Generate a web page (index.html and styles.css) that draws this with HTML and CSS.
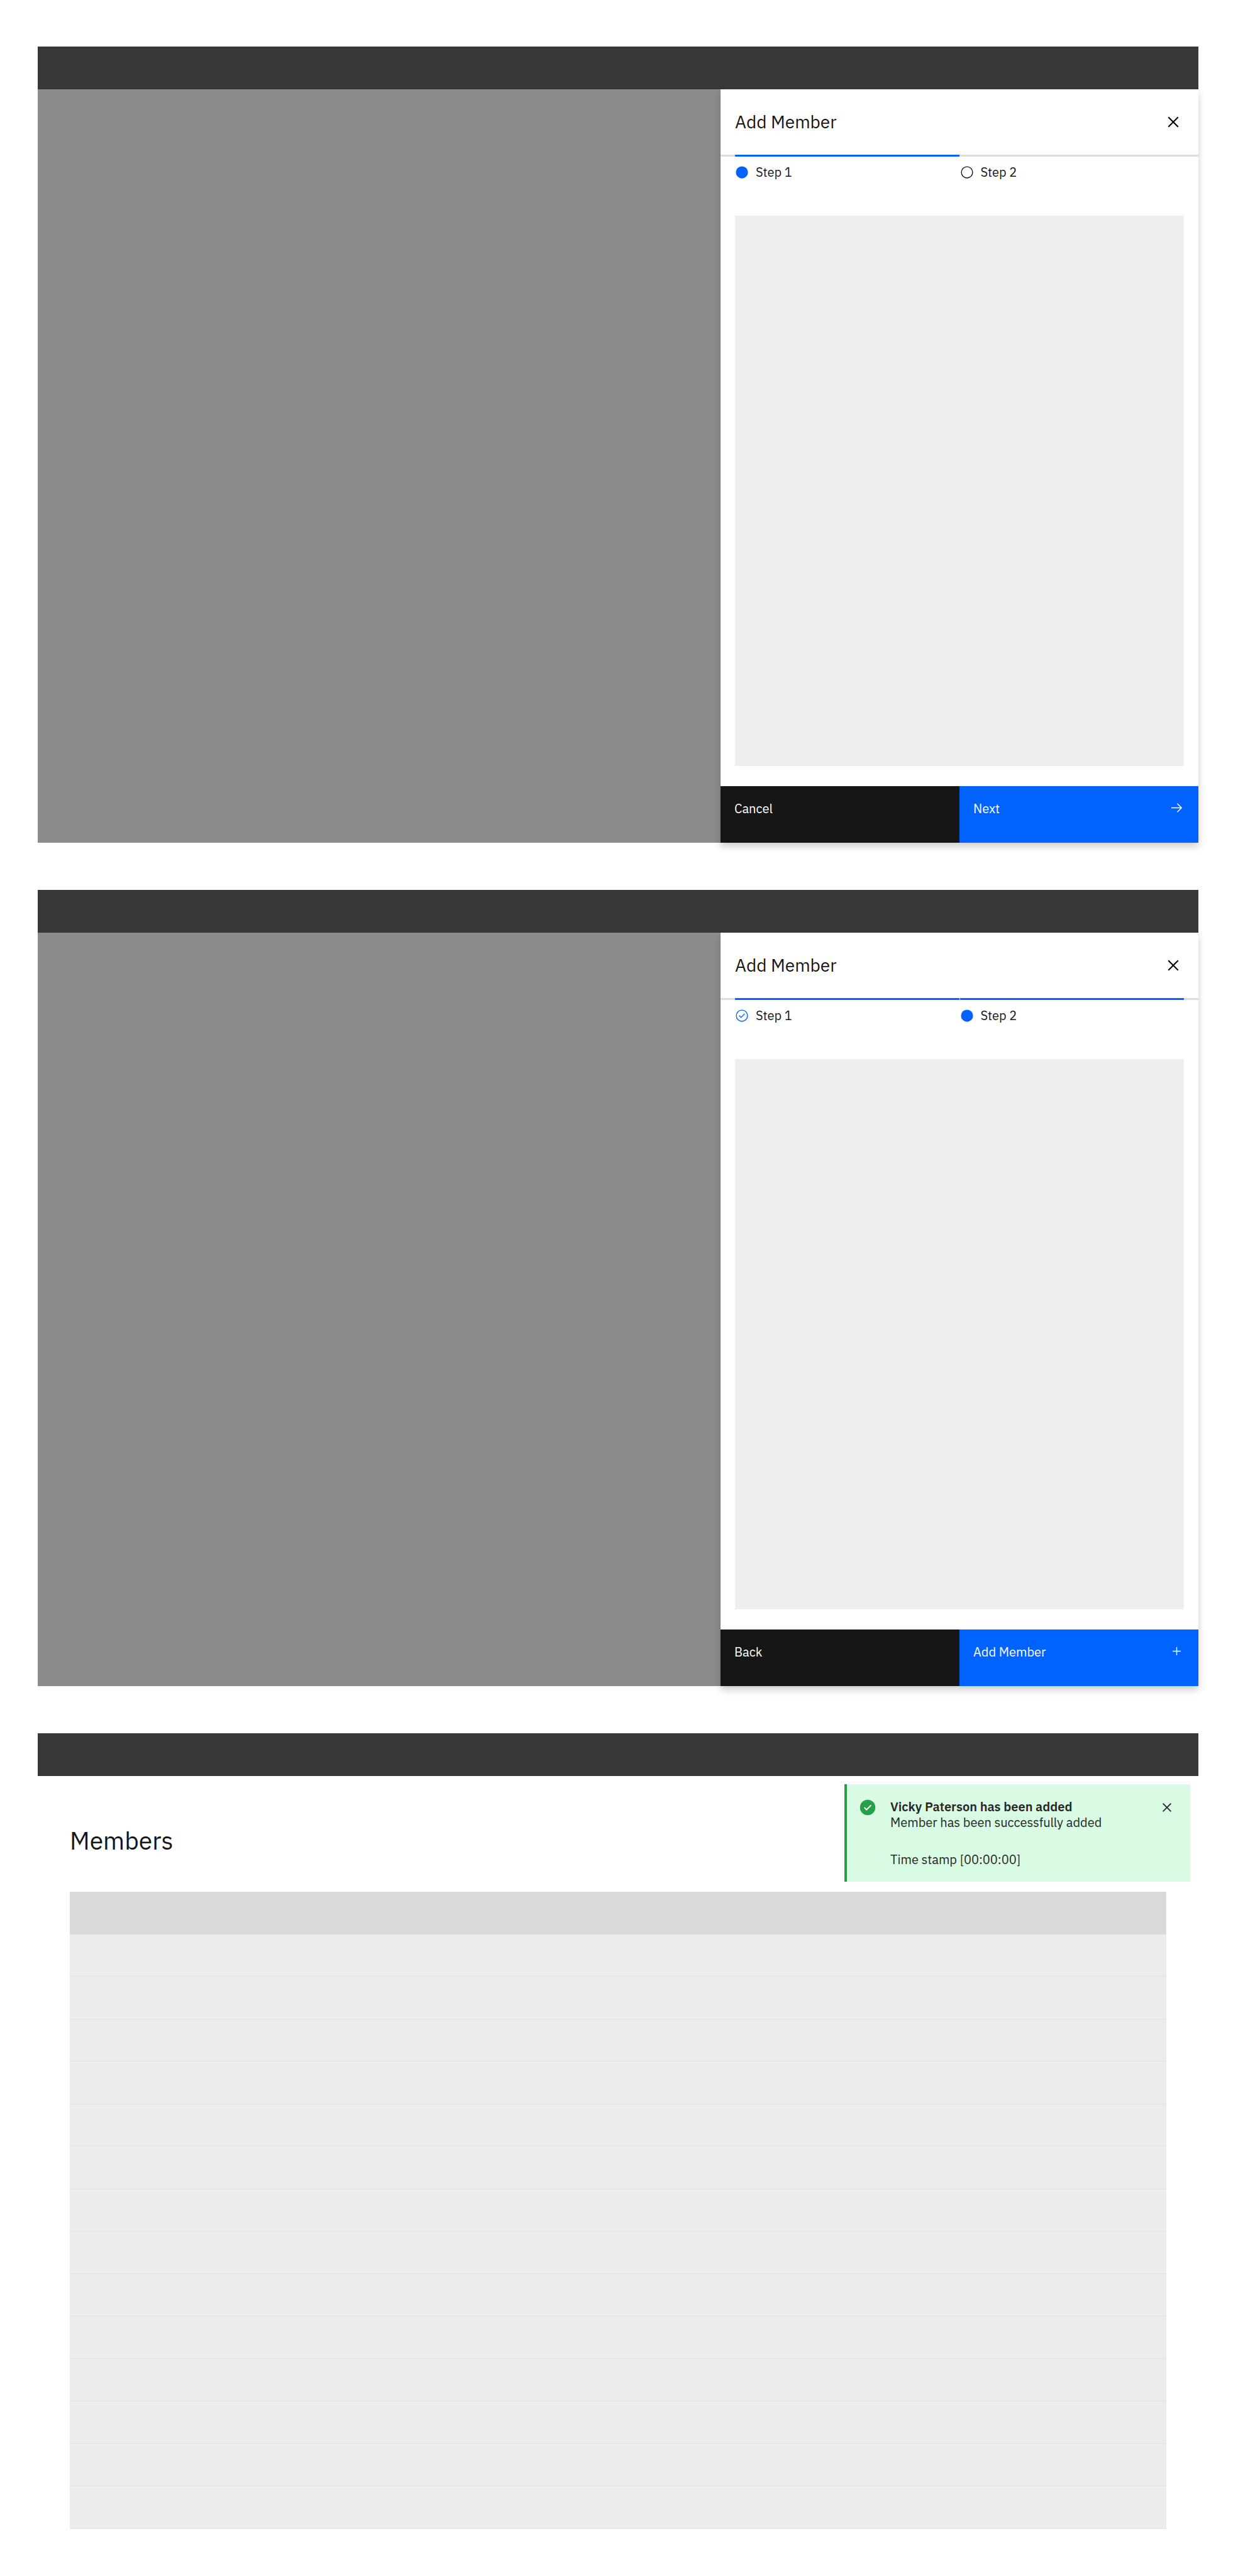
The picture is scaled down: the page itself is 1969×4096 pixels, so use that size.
FILE: index.html
```html
<!DOCTYPE html>
<html lang="en">
<head>
<meta charset="utf-8">
<meta name="viewport" content="width=device-width, initial-scale=1">
<title>Add Member</title>
<link rel="stylesheet" href="styles.css">
</head>
<body>
<main class="page">
  <section class="screen" aria-label="Add member, step 1">
    <div class="topbar"></div>
    <div class="backdrop">
      <div class="panel">
        <header class="panel-header">
          <h2 class="panel-title">Add Member</h2>
          <button class="icon-button" type="button" aria-label="Close">
            <svg class="icon-large" viewBox="0 0 32 32" aria-hidden="true"><path d="M24 9.4L22.6 8 16 14.6 9.4 8 8 9.4l6.6 6.6L8 22.6 9.4 24l6.6-6.6 6.6 6.6 1.4-1.4-6.6-6.6z"/></svg>
          </button>
        </header>
        <ol class="steps">
          <li class="step step-active">
            <svg class="step-icon" viewBox="0 0 32 32" aria-hidden="true"><circle cx="16" cy="16" r="14"/></svg>
            <span>Step 1</span>
          </li>
          <li class="step">
            <svg class="step-icon" viewBox="0 0 32 32" aria-hidden="true"><circle cx="16" cy="16" r="13" fill="none" stroke="#161616" stroke-width="2"/></svg>
            <span>Step 2</span>
          </li>
        </ol>
        <div class="slot"></div>
        <div class="actions">
          <button class="action action-secondary" type="button">Cancel</button>
          <button class="action action-primary" type="button">Next
            <svg class="action-icon" viewBox="0 0 32 32" aria-hidden="true"><path d="M18 6l-1.4 1.4 7.5 7.6H4v2h20.1l-7.5 7.6L18 26l10-10z"/></svg>
          </button>
        </div>
      </div>
    </div>
  </section>

  <section class="screen" aria-label="Add member, step 2">
    <div class="topbar"></div>
    <div class="backdrop">
      <div class="panel">
        <header class="panel-header">
          <h2 class="panel-title">Add Member</h2>
          <button class="icon-button" type="button" aria-label="Close">
            <svg class="icon-large" viewBox="0 0 32 32" aria-hidden="true"><path d="M24 9.4L22.6 8 16 14.6 9.4 8 8 9.4l6.6 6.6L8 22.6 9.4 24l6.6-6.6 6.6 6.6 1.4-1.4-6.6-6.6z"/></svg>
          </button>
        </header>
        <ol class="steps">
          <li class="step step-active">
            <svg class="step-icon" viewBox="0 0 32 32" aria-hidden="true"><circle cx="16" cy="16" r="13" fill="none" stroke="#0062ff" stroke-width="2"/><path d="M14 21.4l-5-5 1.4-1.4 3.6 3.6 7.6-7.6 1.4 1.4z"/></svg>
            <span>Step 1</span>
          </li>
          <li class="step step-active">
            <svg class="step-icon" viewBox="0 0 32 32" aria-hidden="true"><circle cx="16" cy="16" r="14"/></svg>
            <span>Step 2</span>
          </li>
        </ol>
        <div class="slot"></div>
        <div class="actions">
          <button class="action action-secondary" type="button">Back</button>
          <button class="action action-primary" type="button">Add Member
            <svg class="action-icon" viewBox="0 0 32 32" aria-hidden="true"><path d="M17 15V7h-2v8H7v2h8v8h2v-8h8v-2z"/></svg>
          </button>
        </div>
      </div>
    </div>
  </section>

  <section class="screen" aria-label="Members">
    <div class="topbar"></div>
    <div class="members">
      <h1 class="members-title">Members</h1>
      <table class="members-table" aria-label="Members">
        <thead><tr><th></th></tr></thead>
        <tbody>
          <tr><td></td></tr>
          <tr><td></td></tr>
          <tr><td></td></tr>
          <tr><td></td></tr>
          <tr><td></td></tr>
          <tr><td></td></tr>
          <tr><td></td></tr>
          <tr><td></td></tr>
          <tr><td></td></tr>
          <tr><td></td></tr>
          <tr><td></td></tr>
          <tr><td></td></tr>
          <tr><td></td></tr>
          <tr><td></td></tr>
        </tbody>
      </table>
      <div class="toast" role="status">
        <svg class="icon-medium toast-check" viewBox="0 0 32 32" aria-hidden="true"><circle cx="16" cy="16" r="14" fill="#24a148"/><path d="M14 21.6l-5-5 1.6-1.6 3.4 3.4 7.4-7.4 1.6 1.6z" fill="#fff"/></svg>
        <div class="toast-body">
          <p class="toast-title">Vicky Paterson has been added</p>
          <p>Member has been successfully added</p>
          <p class="toast-time">Time stamp [00:00:00]</p>
        </div>
        <button class="icon-button" type="button" aria-label="Dismiss">
          <svg class="icon-medium" viewBox="0 0 32 32" aria-hidden="true"><path d="M24 9.4L22.6 8 16 14.6 9.4 8 8 9.4l6.6 6.6L8 22.6 9.4 24l6.6-6.6 6.6 6.6 1.4-1.4-6.6-6.6z"/></svg>
        </button>
      </div>
    </div>
  </section>
</main>
</body>
</html>
```
FILE: styles.css
```css
* {
  box-sizing: border-box;
}

body {
  margin: 0;
  background: #fff;
  color: #161616;
  font-family: "IBM Plex Sans", Roboto, sans-serif;
  font-size: 20px;
  line-height: 25px;
}

h1, h2, p, ol {
  margin: 0;
  padding: 0;
  font-weight: 400;
}

button {
  border: 0;
  padding: 0;
  background: none;
  color: inherit;
  font: inherit;
  cursor: pointer;
}

svg {
  display: block;
  flex: none;
  fill: currentColor;
}

.page {
  display: flex;
  flex-direction: column;
  gap: 75px;
  padding: 74px 63px 75px 60px;
}

.topbar {
  height: 68px;
  background: #383838;
}

.backdrop {
  display: flex;
  justify-content: flex-end;
  background: #8b8b8b;
}

/* Side panel */
.panel {
  display: flex;
  flex-direction: column;
  width: 760px;
  background: #fff;
  box-shadow: 0 6px 11px rgba(0, 0, 0, 0.2);
}

.panel-header {
  display: flex;
  align-items: center;
  justify-content: space-between;
  height: 104px;
  padding: 0 23px;
}

.panel-title {
  font-size: 28px;
  line-height: 34px;
}

.icon-button {
  display: block;
  color: #000;
}

.icon-large {
  width: 34px;
  height: 34px;
}

.icon-medium {
  width: 28px;
  height: 28px;
}

/* Progress indicator */
.steps {
  display: grid;
  grid-template-columns: 1fr 1fr;
  gap: 1px;
  padding: 0 23px;
  border-top: 3px solid #dcdcdc;
  list-style: none;
}

.step {
  display: flex;
  align-items: center;
  gap: 11px;
  margin-top: -3px;
  padding-top: 12px;
  border-top: 3px solid #dcdcdc;
}

.step-active {
  border-color: #0062ff;
}

.step-icon {
  width: 22px;
  height: 22px;
}

.step-active .step-icon {
  color: #0062ff;
}

.slot {
  height: 875px;
  margin: 57px 23px 32px;
  background: #eee;
}

.actions {
  display: grid;
  grid-template-columns: 1fr 1fr;
}

.action {
  display: flex;
  align-items: flex-start;
  justify-content: space-between;
  height: 90px;
  padding: 23px 23px 23px 22px;
  color: #fff;
  text-align: left;
}

.action-secondary {
  background: #161616;
}

.action-primary {
  background: #0062ff;
}

.action-icon {
  width: 23px;
  height: 23px;
}

/* Members list */
.members {
  position: relative;
  padding: 80px 51px 0;
}

.members-title {
  margin-bottom: 58px;
  font-size: 39px;
  line-height: 46px;
}

.members-table {
  width: 100%;
  border-collapse: separate;
  border-spacing: 0;
}

.members-table th {
  height: 68px;
  padding: 0;
  background: #dadada;
}

.members-table td {
  height: 67px;
  padding: 0;
  border-bottom: 1px solid #dfe2e4;
  background: #ececec;
}

.members-table tr:nth-child(even) td {
  height: 68px;
}

.toast {
  position: absolute;
  top: 13px;
  right: 13px;
  display: flex;
  align-items: flex-start;
  width: 550px;
  padding: 23px;
  border-left: 4px solid #24a148;
  background: #d9fae3;
  color: #262626;
}

.toast-check {
  margin-left: -4px;
}

.toast-body {
  flex: 1;
  margin-left: 22px;
}

.toast-title {
  font-weight: 600;
}

.toast-time {
  margin-top: 34px;
}

.toast .icon-button {
  color: #262626;
}
```
